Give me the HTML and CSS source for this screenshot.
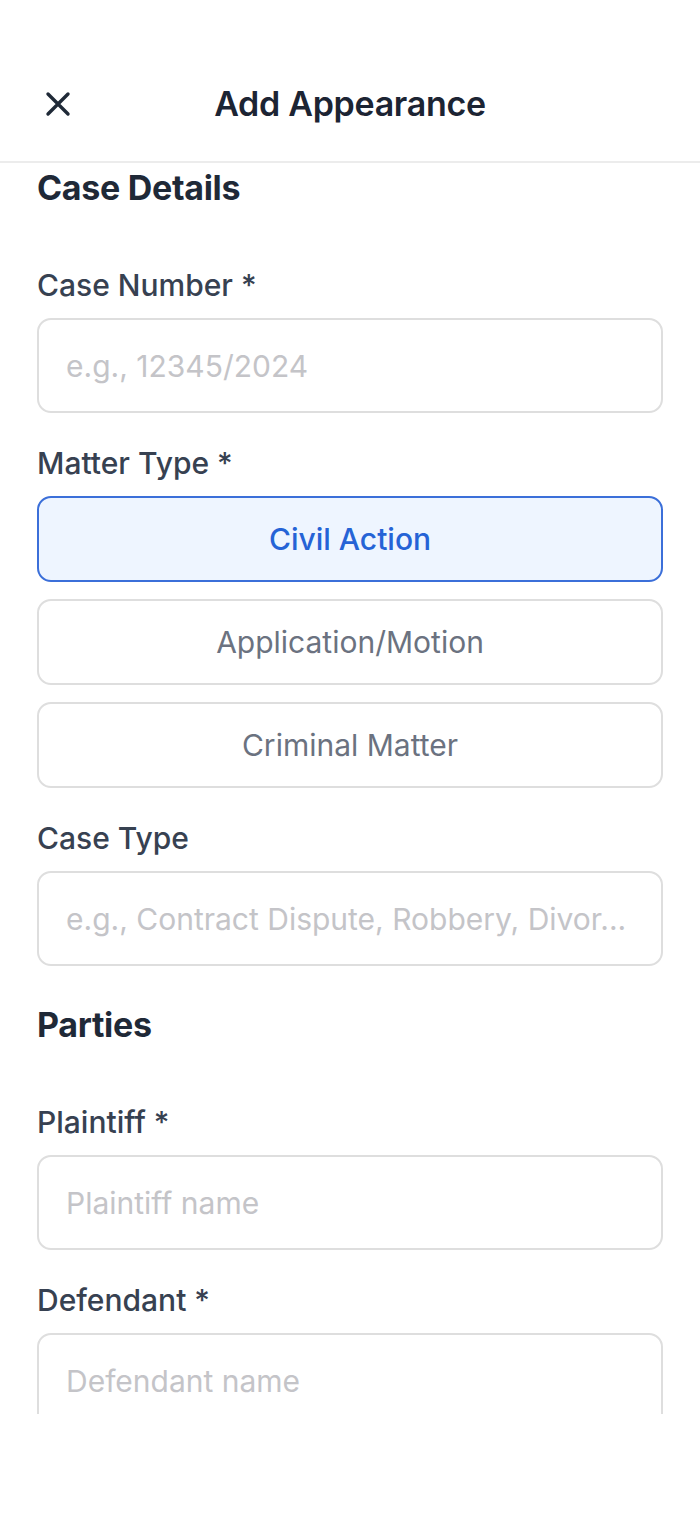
FILE: index.html
```html
<!DOCTYPE html>
<html lang="en">
<head>
    <meta charset="UTF-8">
    <meta name="viewport" content="width=device-width, initial-scale=1.0">
    <title>Add Appearance</title>
    <link rel="stylesheet" href="styles.css">
</head>
<body>
    <div class="screen">
        <header class="topbar">
            <button class="close-btn" aria-label="Close">
                <svg width="26" height="26" viewBox="0 0 26 26">
                    <path d="M3 3 L23 23 M23 3 L3 23" stroke="#1f2937" stroke-width="3.4" stroke-linecap="round" fill="none"/>
                </svg>
            </button>
            <h1 class="title">Add Appearance</h1>
        </header>

        <main class="content">
            <section class="section">
                <h2 class="section-title">Case Details</h2>

                <div class="field">
                    <label class="field-label">Case Number *</label>
                    <input class="text-input" type="text" placeholder="e.g., 12345/2024">
                </div>

                <div class="field">
                    <label class="field-label">Matter Type *</label>
                    <div class="options">
                        <button class="option selected">Civil Action</button>
                        <button class="option">Application/Motion</button>
                        <button class="option">Criminal Matter</button>
                    </div>
                </div>

                <div class="field">
                    <label class="field-label">Case Type</label>
                    <input class="text-input" type="text" placeholder="e.g., Contract Dispute, Robbery, Divor...">
                </div>
            </section>

            <section class="section">
                <h2 class="section-title">Parties</h2>

                <div class="field">
                    <label class="field-label">Plaintiff *</label>
                    <input class="text-input" type="text" placeholder="Plaintiff name">
                </div>

                <div class="field">
                    <label class="field-label">Defendant *</label>
                    <input class="text-input" type="text" placeholder="Defendant name">
                </div>
            </section>
        </main>
    </div>
</body>
</html>
```

FILE: styles.css
```css
body {
    font-family: Inter, "Noto Sans", sans-serif;
    background-color: #ffffff;
    margin: 0;
    padding: 0;
    color: #1f2937;
}
.screen {
    width: 700px;
    height: 1515px;
    overflow: hidden;
}
.topbar {
    height: 163px;
    display: flex;
    align-items: center;
    justify-content: center;
    position: relative;
    padding-top: 46px;
    box-sizing: border-box;
    border-bottom: 2px solid #ececec;
}
.close-btn {
    position: absolute;
    left: 33px;
    top: 79px;
    width: 50px;
    height: 50px;
    border: none;
    background: none;
    padding: 0;
    display: flex;
    align-items: center;
    justify-content: center;
}
.title {
    margin: 0;
    font-size: 34px;
    font-weight: 600;
    color: #1c2433;
    letter-spacing: -0.3px;
}
.content {
    height: 1251px;
    box-sizing: border-box;
    overflow: hidden;
    padding: 5px 37px 0;
}
.section {
    padding-bottom: 7px;
}
.section-title {
    margin: 0 0 59px;
    font-size: 34px;
    line-height: 40px;
    font-weight: 700;
    color: #1f2937;
    letter-spacing: -0.3px;
}
.field {
    display: flex;
    flex-direction: column;
    margin-bottom: 32px;
}
.field-label {
    font-size: 30px;
    line-height: 36px;
    font-weight: 500;
    color: #374151;
    margin-bottom: 15px;
}
.text-input {
    height: 95px;
    box-sizing: border-box;
    border: 2px solid #dedede;
    border-radius: 14px;
    padding: 0 27px;
    font-family: inherit;
    font-size: 30px;
    color: #1f2937;
    background: #ffffff;
    outline: none;
}
.text-input::placeholder {
    color: #c4c4c8;
}
.options {
    display: flex;
    flex-direction: column;
    gap: 17px;
}
.option {
    height: 86px;
    border: 2px solid #dedede;
    border-radius: 14px;
    background: #ffffff;
    font-family: inherit;
    font-size: 30px;
    color: #6b7280;
    padding: 0;
}
.option.selected {
    background-color: #eef5ff;
    border-color: #3b6fd9;
    color: #2563d6;
    font-weight: 500;
}
```
